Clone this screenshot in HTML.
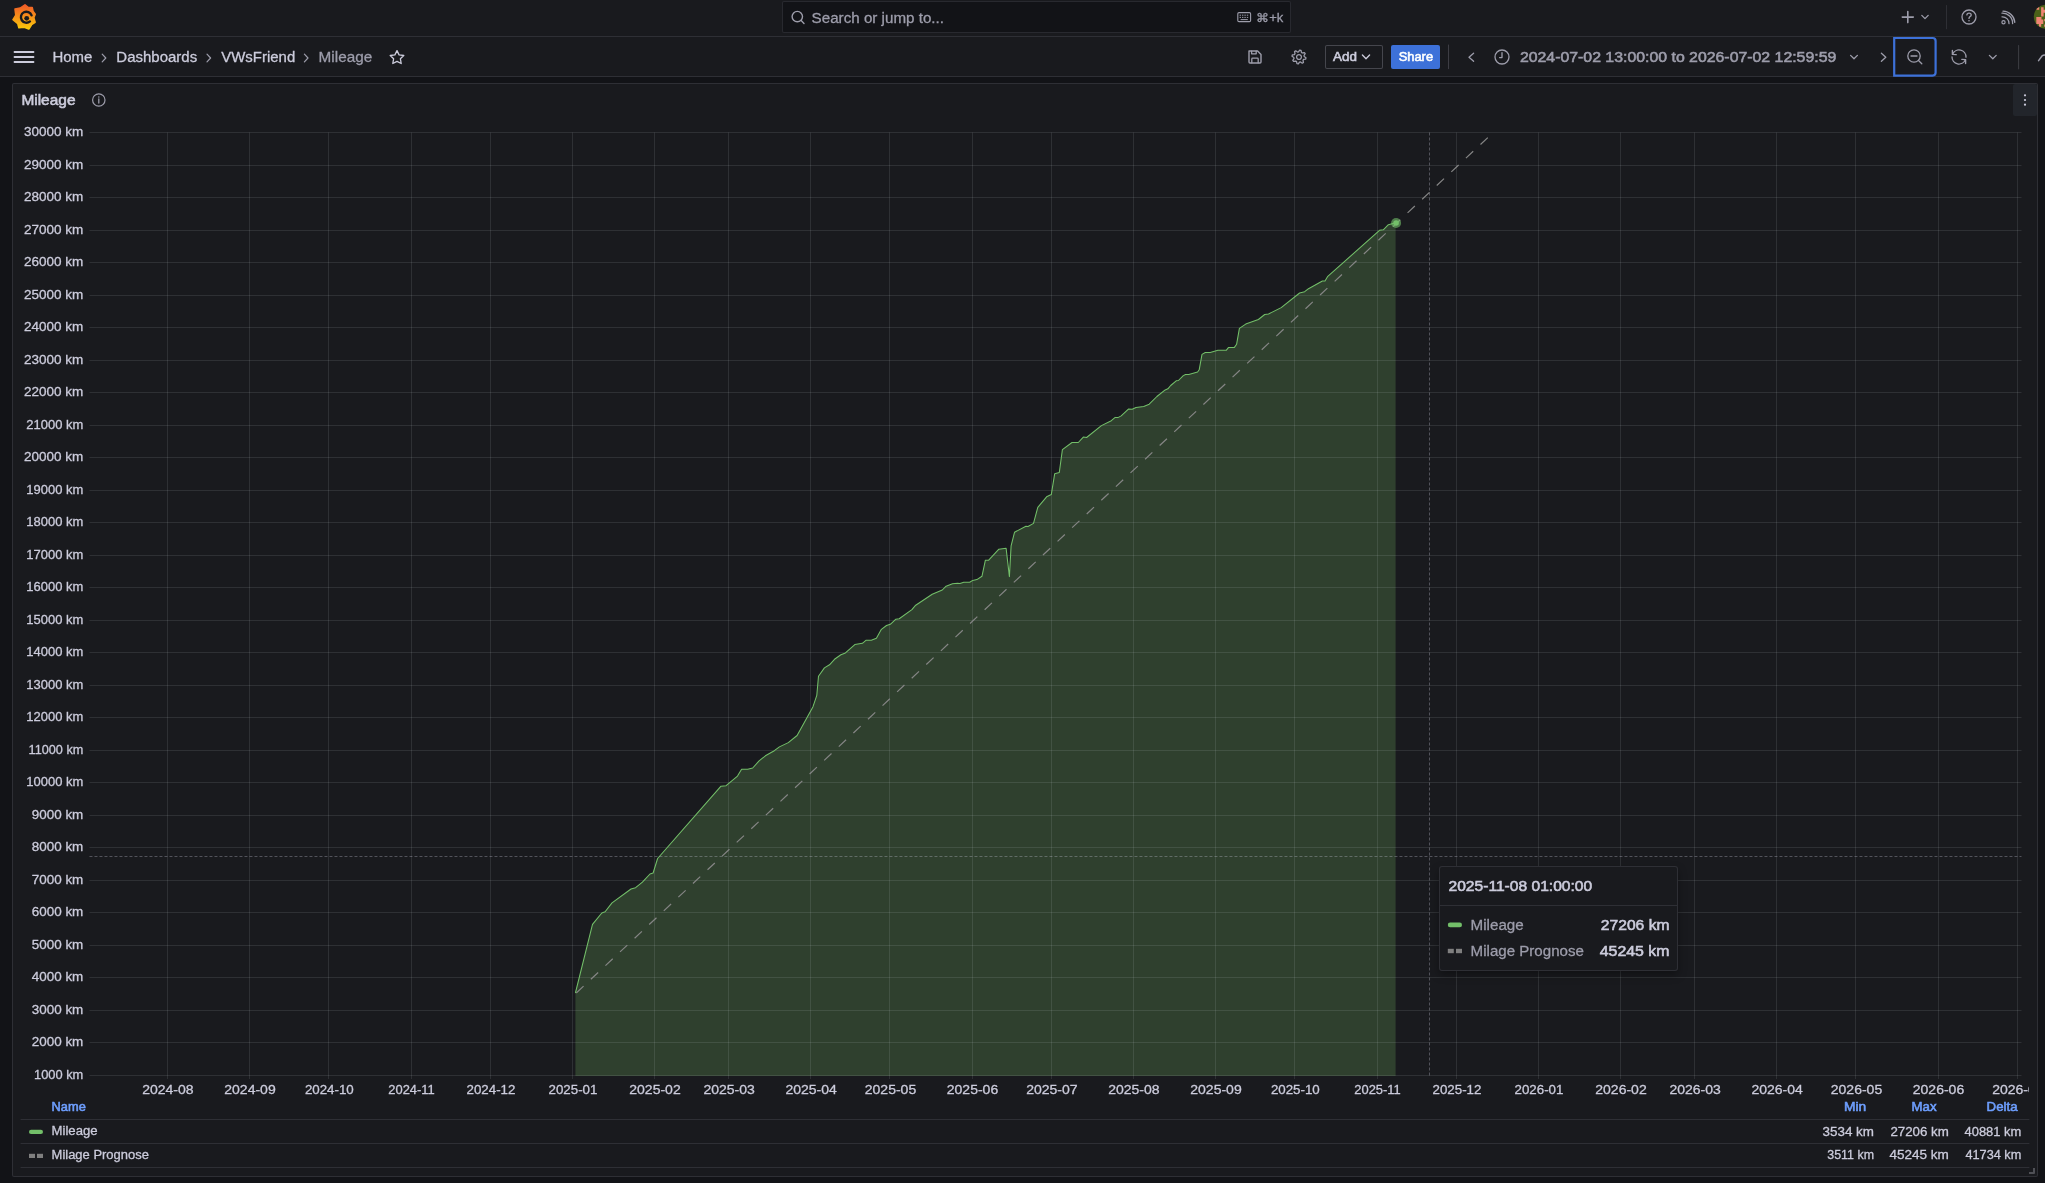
<!DOCTYPE html>
<html><head><meta charset="utf-8"><title>Mileage - VWsFriend - Dashboards - Grafana</title>
<style>
*{box-sizing:border-box;margin:0;padding:0}
html,body{width:2045px;height:1183px;overflow:hidden;background:#121317;font-family:"Liberation Sans", sans-serif;color:#ccccdc}
.topbar{position:absolute;left:0;top:0;width:2045px;height:37px;background:#191a1e;border-bottom:1px solid rgba(204,204,220,0.12)}
.toolbar{position:absolute;left:0;top:37px;width:2045px;height:40px;background:#191a1e;border-bottom:1px solid rgba(204,204,220,0.12)}
.search{position:absolute;left:782px;top:1px;width:509px;height:32px;background:#121317;border:1px solid rgba(204,204,220,0.12);border-radius:2px}
.btn-add{position:absolute;left:1325px;top:8px;width:58px;height:24px;border:1px solid rgba(204,204,220,0.25);border-radius:2px;background:#191a1e}
.btn-share{position:absolute;left:1391px;top:8px;width:49px;height:24px;border-radius:2px;background:#3d71d9}
.panel{position:absolute;left:12px;top:83px;width:2026px;height:1094px;background:#191a1e;border:1px solid rgba(204,204,220,0.12);border-radius:2px}
.pmenu{position:absolute;left:2013px;top:84px;width:24px;height:32px;background:#22252b;border-radius:2px}
.tooltip{position:absolute;left:1439px;top:866px;width:239px;height:105px;background:#191a1e;border:1px solid rgba(204,204,220,0.12);border-radius:3px;box-shadow:0 4px 8px rgba(0,0,0,0.35)}
.tooltip .hdr{position:absolute;left:0;top:38px;width:100%;height:1px;background:rgba(204,204,220,0.12)}
</style></head><body>
<div class="topbar"><div class="search"></div></div>
<div class="toolbar"><div class="btn-add"></div><div class="btn-share"></div></div>
<div class="panel"></div>
<div class="pmenu"></div>

<svg width="2045" height="1183" style="position:absolute;left:0;top:0">
<defs><clipPath id="plot"><rect x="89.47" y="132.0" width="1932.0" height="944.0"/></clipPath></defs>
<path d="M575.4 993.0 L592.5 924.4 L601.8 913.0 L605.1 911.8 L612.0 902.9 L631.0 889.0 L635.6 887.7 L642.4 882.1 L650.0 874.0 L653.1 873.0 L657.6 858.5 L721.0 786.2 L726.1 785.7 L737.5 776.1 L741.6 769.2 L747.7 769.2 L752.7 768.0 L759.1 760.9 L765.4 755.8 L774.3 750.7 L779.4 746.9 L788.3 742.6 L797.1 735.5 L805.4 720.6 L813.0 706.7 L816.8 695.3 L818.5 676.3 L824.4 667.9 L829.5 664.8 L834.5 659.3 L840.9 654.7 L845.4 652.9 L854.8 644.6 L862.4 643.3 L866.2 640.2 L871.3 640.2 L876.4 638.2 L881.4 629.3 L886.5 625.5 L890.3 624.3 L895.9 619.2 L899.2 618.7 L911.9 609.6 L915.7 605.2 L932.2 594.3 L942.3 590.0 L946.1 586.2 L952.5 583.7 L957.5 583.2 L960.0 583.4 L963.8 582.2 L969.7 582.3 L972.7 580.4 L976.9 579.6 L982.0 576.2 L985.4 560.2 L988.7 560.2 L998.9 549.2 L1006.1 548.2 L1009.4 576.6 L1011.1 545.8 L1014.5 532.3 L1025.9 526.3 L1028.0 526.5 L1033.5 523.4 L1037.8 507.3 L1046.6 496.8 L1051.3 494.6 L1054.7 473.7 L1059.3 472.5 L1062.4 449.6 L1072.0 442.5 L1078.3 442.5 L1083.3 437.1 L1086.6 437.5 L1101.4 425.6 L1111.3 420.7 L1115.2 417.4 L1117.9 417.6 L1121.2 415.9 L1128.4 409.1 L1132.2 409.3 L1136.0 407.5 L1143.7 406.4 L1149.2 404.2 L1156.9 396.5 L1165.2 389.9 L1167.9 388.8 L1170.7 385.5 L1176.2 380.8 L1178.4 380.5 L1183.3 375.6 L1185.5 374.5 L1188.8 374.5 L1197.6 372.0 L1199.2 369.8 L1202.0 354.4 L1205.3 352.5 L1210.2 352.5 L1217.9 350.3 L1226.2 350.3 L1228.4 347.6 L1234.4 347.4 L1236.6 344.3 L1239.4 328.4 L1245.7 324.1 L1258.4 319.5 L1264.7 314.5 L1268.5 314.0 L1281.2 307.6 L1299.6 293.0 L1304.7 291.7 L1308.5 288.7 L1322.4 281.0 L1325.0 281.0 L1327.5 276.7 L1379.5 230.3 L1383.3 229.8 L1388.4 224.7 L1395.6 222.7 L1395.6 1076 L575.4 1076 Z" fill="rgb(47,64,46)"/>
<path d="M89.5 1075.5H2021.5 M89.5 1042.5H2021.5 M89.5 1010.5H2021.5 M89.5 977.5H2021.5 M89.5 945.5H2021.5 M89.5 912.5H2021.5 M89.5 880.5H2021.5 M89.5 847.5H2021.5 M89.5 815.5H2021.5 M89.5 782.5H2021.5 M89.5 750.5H2021.5 M89.5 717.5H2021.5 M89.5 685.5H2021.5 M89.5 652.5H2021.5 M89.5 620.5H2021.5 M89.5 587.5H2021.5 M89.5 555.5H2021.5 M89.5 522.5H2021.5 M89.5 490.5H2021.5 M89.5 457.5H2021.5 M89.5 425.5H2021.5 M89.5 392.5H2021.5 M89.5 360.5H2021.5 M89.5 327.5H2021.5 M89.5 295.5H2021.5 M89.5 262.5H2021.5 M89.5 230.5H2021.5 M89.5 197.5H2021.5 M89.5 165.5H2021.5 M89.5 132.5H2021.5 M167.5 132.5V1079.0 M249.5 132.5V1079.0 M328.5 132.5V1079.0 M411.5 132.5V1079.0 M490.5 132.5V1079.0 M572.5 132.5V1079.0 M654.5 132.5V1079.0 M728.5 132.5V1079.0 M810.5 132.5V1079.0 M889.5 132.5V1079.0 M972.5 132.5V1079.0 M1051.5 132.5V1079.0 M1133.5 132.5V1079.0 M1215.5 132.5V1079.0 M1294.5 132.5V1079.0 M1377.5 132.5V1079.0 M1456.5 132.5V1079.0 M1538.5 132.5V1079.0 M1620.5 132.5V1079.0 M1694.5 132.5V1079.0 M1776.5 132.5V1079.0 M1855.5 132.5V1079.0 M1938.5 132.5V1079.0 M2017.5 132.5V1079.0" stroke="rgba(240,250,255,0.10)" stroke-width="1" fill="none"/>
<g clip-path="url(#plot)">
<line x1="575.4" y1="993.8" x2="2021.5" y2="-363.2" stroke="#858585" stroke-width="1.2" stroke-dasharray="10 10" stroke-dashoffset="-1.2"/>
</g>
<path d="M575.4 993.0 L592.5 924.4 L601.8 913.0 L605.1 911.8 L612.0 902.9 L631.0 889.0 L635.6 887.7 L642.4 882.1 L650.0 874.0 L653.1 873.0 L657.6 858.5 L721.0 786.2 L726.1 785.7 L737.5 776.1 L741.6 769.2 L747.7 769.2 L752.7 768.0 L759.1 760.9 L765.4 755.8 L774.3 750.7 L779.4 746.9 L788.3 742.6 L797.1 735.5 L805.4 720.6 L813.0 706.7 L816.8 695.3 L818.5 676.3 L824.4 667.9 L829.5 664.8 L834.5 659.3 L840.9 654.7 L845.4 652.9 L854.8 644.6 L862.4 643.3 L866.2 640.2 L871.3 640.2 L876.4 638.2 L881.4 629.3 L886.5 625.5 L890.3 624.3 L895.9 619.2 L899.2 618.7 L911.9 609.6 L915.7 605.2 L932.2 594.3 L942.3 590.0 L946.1 586.2 L952.5 583.7 L957.5 583.2 L960.0 583.4 L963.8 582.2 L969.7 582.3 L972.7 580.4 L976.9 579.6 L982.0 576.2 L985.4 560.2 L988.7 560.2 L998.9 549.2 L1006.1 548.2 L1009.4 576.6 L1011.1 545.8 L1014.5 532.3 L1025.9 526.3 L1028.0 526.5 L1033.5 523.4 L1037.8 507.3 L1046.6 496.8 L1051.3 494.6 L1054.7 473.7 L1059.3 472.5 L1062.4 449.6 L1072.0 442.5 L1078.3 442.5 L1083.3 437.1 L1086.6 437.5 L1101.4 425.6 L1111.3 420.7 L1115.2 417.4 L1117.9 417.6 L1121.2 415.9 L1128.4 409.1 L1132.2 409.3 L1136.0 407.5 L1143.7 406.4 L1149.2 404.2 L1156.9 396.5 L1165.2 389.9 L1167.9 388.8 L1170.7 385.5 L1176.2 380.8 L1178.4 380.5 L1183.3 375.6 L1185.5 374.5 L1188.8 374.5 L1197.6 372.0 L1199.2 369.8 L1202.0 354.4 L1205.3 352.5 L1210.2 352.5 L1217.9 350.3 L1226.2 350.3 L1228.4 347.6 L1234.4 347.4 L1236.6 344.3 L1239.4 328.4 L1245.7 324.1 L1258.4 319.5 L1264.7 314.5 L1268.5 314.0 L1281.2 307.6 L1299.6 293.0 L1304.7 291.7 L1308.5 288.7 L1322.4 281.0 L1325.0 281.0 L1327.5 276.7 L1379.5 230.3 L1383.3 229.8 L1388.4 224.7 L1395.6 222.7" stroke="#73bf69" stroke-width="1.05" fill="none" stroke-linejoin="round"/>
<circle cx="1396.1" cy="223" r="5" fill="rgba(115,191,105,0.6)"/>
<circle cx="1396.1" cy="223" r="2.8" fill="#73bf69"/>
<line x1="89.47" y1="856.5" x2="2021.49" y2="856.5" stroke="rgba(204,204,220,0.32)" stroke-width="1" stroke-dasharray="3 2"/>
<line x1="1429.5" y1="132.5" x2="1429.5" y2="1075.5" stroke="rgba(204,204,220,0.32)" stroke-width="1" stroke-dasharray="3 2"/>
</svg>
<div class="tooltip"><div class="hdr"></div></div>

<svg width="2045" height="1183" style="position:absolute;left:0;top:0" fill="none" stroke-linecap="round" stroke-linejoin="round">
<defs><linearGradient id="lg" x1="0" y1="0" x2="0" y2="1"><stop offset="0" stop-color="#f05a28"/><stop offset="1" stop-color="#fbca0a"/></linearGradient></defs>
<!-- logo -->
<path d="M25 4.8 L28.1 7.3 L32.2 7.5 L33 11.2 L35.2 14.2 L33.8 17.6 L35.1 22.3 L31.5 24.7 L28.8 29 L24.3 27.2 L18.9 27.7 L17.8 23.7 L13 19.7 L15.8 15.2 L15 9 L20.2 8.1 Z" fill="url(#lg)" stroke="url(#lg)" stroke-width="1.6" stroke-linejoin="round"/>
<path d="M31.57 15.32 A5.5 5.5 0 1 0 29.94 21.41" stroke="#191a1e" stroke-width="2.4" fill="none" stroke-linecap="round"/>
<circle cx="26.7" cy="18.3" r="2.4" fill="#191a1e" stroke="none"/>
<!-- search icon -->
<circle cx="797.3" cy="16.6" r="5.2" stroke="#9d9dab" stroke-width="1.4"/>
<path d="M801.2 20.6 L804 23.4" stroke="#9d9dab" stroke-width="1.4"/>
<!-- keyboard -->
<rect x="1237.8" y="12.6" width="12.8" height="9" rx="1.2" stroke="#9d9dab" stroke-width="1.1"/>
<path d="M1240 15.2h0.6M1242.4 15.2h0.6M1244.8 15.2h0.6M1247.2 15.2h0.6M1240 17.4h0.6M1242.4 17.4h0.6M1244.8 17.4h0.6M1247.2 17.4h0.6M1241 19.6h6.4" stroke="#9d9dab" stroke-width="1"/>
<!-- plus -->
<path d="M1907.8 11.6V22.6M1902.3 17.1H1913.3" stroke="#9d9dab" stroke-width="1.6"/>
<path d="M1921.8 15.4 L1925 18.6 L1928.2 15.4" stroke="#9d9dab" stroke-width="1.3"/>
<path d="M1946.5 5.5V28.8" stroke="rgba(204,204,220,0.12)" stroke-width="1"/>
<!-- help -->
<circle cx="1969" cy="17" r="7" stroke="#9d9dab" stroke-width="1.3"/>
<path d="M1966.9 14.9 C1966.9 12.4 1971.2 12.4 1971.2 14.9 C1971.2 16.6 1969 16.6 1969 18.4" stroke="#9d9dab" stroke-width="1.3"/>
<circle cx="1969" cy="20.7" r="0.8" fill="#9d9dab" stroke="none"/>
<!-- rss -->
<circle cx="2003.5" cy="22.3" r="1.6" stroke="#9d9dab" stroke-width="1.2"/>
<path d="M2002 16.8 A6.5 6.5 0 0 1 2009 23.6 M2002 13.2 A10 10 0 0 1 2012.6 23.6 M2003 11.2 A12 12 0 0 1 2014.8 22.4" stroke="#9d9dab" stroke-width="1.3"/>
<!-- avatar -->
<defs><clipPath id="av"><circle cx="2045.9" cy="16.8" r="12.1"/></clipPath></defs>
<g clip-path="url(#av)" stroke="none">
<rect x="2033" y="4" width="14" height="26" fill="#4b6119"/>
<path d="M2036.4 7h2.8v2.8h-2.8z M2041.1 7.3h2.5v9.2h-2.5z M2043.5 9.7h2v3.1h-2z M2036.3 17h5.2v7h-5.2z M2041.4 19.5h1.9v4.5h-1.9z M2038.9 24h2.3v2.8h-2.3z M2044.2 18.9h1.8v2.4h-1.8z M2044.2 24.4h1.8v2.4h-1.8z" fill="#ef8474"/>
</g>
<!-- hamburger -->
<path d="M14.5 52H33.5M14.5 57H33.5M14.5 62H33.5" stroke="#ccccdc" stroke-width="1.8"/>
<!-- breadcrumb chevrons -->
<path d="M102.2 54.2 L105.8 58 L102.2 61.8" stroke="#9d9dab" stroke-width="1.2"/>
<path d="M207 54.2 L210.6 58 L207 61.8" stroke="#9d9dab" stroke-width="1.2"/>
<path d="M304.4 54.2 L308 58 L304.4 61.8" stroke="#9d9dab" stroke-width="1.2"/>
<!-- star -->
<path d="M397 50.6 L399.1 54.9 L403.8 55.5 L400.4 58.8 L401.2 63.5 L397 61.3 L392.8 63.5 L393.6 58.8 L390.2 55.5 L394.9 54.9 Z" stroke="#ccccdc" stroke-width="1.3"/>
<!-- save -->
<path d="M1249 51 H1257.6 L1261 54.4 V62 Q1261 63 1260 63 H1250 Q1249 63 1249 62 Z" stroke="#9d9dab" stroke-width="1.4"/>
<path d="M1251.6 51.2 V53.8 H1256.2 V51.2 M1251.8 62.8 V59 Q1251.8 58.2 1252.6 58.2 H1257.4 Q1258.2 58.2 1258.2 59 V62.8" stroke="#9d9dab" stroke-width="1.3"/>
<!-- gear -->
<g transform="translate(1299,57)" stroke="#9d9dab" stroke-width="1.3">
<path d="M5.18 -0.51L6.97 0.69L6.70 2.03L4.58 2.45L4.02 3.30L4.44 5.41L3.30 6.17L1.51 4.98L0.51 5.18L-0.69 6.97L-2.03 6.70L-2.45 4.58L-3.30 4.02L-5.41 4.44L-6.17 3.30L-4.98 1.51L-5.18 0.51L-6.97 -0.69L-6.70 -2.03L-4.58 -2.45L-4.02 -3.30L-4.44 -5.41L-3.30 -6.17L-1.51 -4.98L-0.51 -5.18L0.69 -6.97L2.03 -6.70L2.45 -4.58L3.30 -4.02L5.41 -4.44L6.17 -3.30L4.98 -1.51Z"/>
<circle cx="0" cy="0" r="2.4"/>
</g>
<!-- add chevron -->
<path d="M1362.4 55 L1366 58.8 L1369.6 55" stroke="#ccccdc" stroke-width="1.3"/>
<!-- separators -->
<path d="M1448.5 45V68.7" stroke="rgba(204,204,220,0.2)" stroke-width="1"/>
<path d="M2018.6 45.5V68.9" stroke="rgba(204,204,220,0.2)" stroke-width="1"/>
<!-- time < -->
<path d="M1473.6 53.2 L1469 57.2 L1473.6 61.2" stroke="#9d9dab" stroke-width="1.3"/>
<!-- clock -->
<circle cx="1502" cy="57" r="7" stroke="#9d9dab" stroke-width="1.3"/>
<path d="M1502 52.6 V57.6 H1499.6" stroke="#9d9dab" stroke-width="1.3"/>
<!-- time chevron down -->
<path d="M1850.6 55.4 L1854 58.8 L1857.4 55.4" stroke="#9d9dab" stroke-width="1.3"/>
<path d="M1881.4 53.2 L1885.8 57.2 L1881.4 61.2" stroke="#9d9dab" stroke-width="1.3"/>
<!-- zoom focus box -->
<path d="M1894.2 38 H1932.6 Q1935.6 38 1935.6 41 V72.6 Q1935.6 75.6 1932.6 75.6 H1894.2 Z" stroke="#3d71d9" stroke-width="2.2" stroke-linecap="butt" stroke-linejoin="miter"/>
<circle cx="1914" cy="56" r="6.2" stroke="#9d9dab" stroke-width="1.3"/>
<path d="M1911 56 H1917 M1918.5 60.5 L1921.8 63.8" stroke="#9d9dab" stroke-width="1.3"/>
<!-- refresh -->
<path d="M1952.6 54.2 A7 7 0 0 1 1966 57.2" stroke="#9d9dab" stroke-width="1.3"/>
<path d="M1965.4 59.8 A7 7 0 0 1 1952 56.8" stroke="#9d9dab" stroke-width="1.3"/>
<path d="M1952.4 50.4 L1952.4 54.4 L1956.2 54.6" stroke="#9d9dab" stroke-width="1.4"/>
<path d="M1965.6 63.6 L1965.6 59.6 L1961.8 59.4" stroke="#9d9dab" stroke-width="1.4"/>
<path d="M1989.4 55.4 L1992.8 58.8 L1996.2 55.4" stroke="#9d9dab" stroke-width="1.3"/>
<path d="M2038.6 60.6 L2042.2 55.8 Q2043 55 2045 55" stroke="#9d9dab" stroke-width="1.5"/>
<!-- panel info icon -->
<circle cx="98.8" cy="100" r="6.2" stroke="#9d9dab" stroke-width="1.2"/>
<path d="M98.8 99 V103" stroke="#9d9dab" stroke-width="1.3"/>
<circle cx="98.8" cy="96.9" r="0.75" fill="#9d9dab" stroke="none"/>
<!-- panel menu -->
<circle cx="2025" cy="95.3" r="1.1" fill="#ccccdc" stroke="none"/>
<circle cx="2025" cy="100" r="1.1" fill="#ccccdc" stroke="none"/>
<circle cx="2025" cy="104.7" r="1.1" fill="#ccccdc" stroke="none"/>
<!-- legend icons -->
<rect x="29" y="1129.8" width="14" height="4.2" rx="2.1" fill="#73bf69" stroke="none"/>
<rect x="29" y="1153.8" width="6" height="4.2" fill="#7f7f7f" stroke="none"/>
<rect x="37" y="1153.8" width="6" height="4.2" fill="#7f7f7f" stroke="none"/>
<path d="M21 1119.5H2029M21 1143.5H2029M21 1167.5H2029" stroke="rgba(204,204,220,0.12)" stroke-width="1"/>
<!-- tooltip icons -->
<rect x="1447.8" y="922.6" width="14.2" height="4.6" rx="2.3" fill="#73bf69" stroke="none"/>
<rect x="1447.8" y="948.8" width="6" height="4.4" fill="#7f7f7f" stroke="none"/>
<rect x="1456" y="948.8" width="6" height="4.4" fill="#7f7f7f" stroke="none"/>
<!-- resize handle -->
<path d="M2029 1173 H2034 V1168" stroke="rgba(204,204,220,0.3)" stroke-width="2" stroke-linecap="butt"/>
</svg>
<svg width="2045" height="1183" style="position:absolute;left:0;top:0;font-family:&quot;Liberation Sans&quot;,sans-serif;filter:blur(0)"><defs><clipPath id="xclip"><rect x="0" y="1070" width="2029" height="40"/></clipPath></defs><text x="83.3" y="1079.0" font-size="12" fill="#ccccdc" stroke="#ccccdc" stroke-width="0.28" text-anchor="end" textLength="49.3" lengthAdjust="spacingAndGlyphs">1000 km</text>
<text x="83.3" y="1046.0" font-size="12" fill="#ccccdc" stroke="#ccccdc" stroke-width="0.28" text-anchor="end" textLength="51.5" lengthAdjust="spacingAndGlyphs">2000 km</text>
<text x="83.3" y="1014.0" font-size="12" fill="#ccccdc" stroke="#ccccdc" stroke-width="0.28" text-anchor="end" textLength="51.5" lengthAdjust="spacingAndGlyphs">3000 km</text>
<text x="83.3" y="981.0" font-size="12" fill="#ccccdc" stroke="#ccccdc" stroke-width="0.28" text-anchor="end" textLength="51.5" lengthAdjust="spacingAndGlyphs">4000 km</text>
<text x="83.3" y="949.0" font-size="12" fill="#ccccdc" stroke="#ccccdc" stroke-width="0.28" text-anchor="end" textLength="51.5" lengthAdjust="spacingAndGlyphs">5000 km</text>
<text x="83.3" y="916.0" font-size="12" fill="#ccccdc" stroke="#ccccdc" stroke-width="0.28" text-anchor="end" textLength="51.5" lengthAdjust="spacingAndGlyphs">6000 km</text>
<text x="83.3" y="884.0" font-size="12" fill="#ccccdc" stroke="#ccccdc" stroke-width="0.28" text-anchor="end" textLength="51.5" lengthAdjust="spacingAndGlyphs">7000 km</text>
<text x="83.3" y="851.0" font-size="12" fill="#ccccdc" stroke="#ccccdc" stroke-width="0.28" text-anchor="end" textLength="51.5" lengthAdjust="spacingAndGlyphs">8000 km</text>
<text x="83.3" y="819.0" font-size="12" fill="#ccccdc" stroke="#ccccdc" stroke-width="0.28" text-anchor="end" textLength="51.5" lengthAdjust="spacingAndGlyphs">9000 km</text>
<text x="83.3" y="786.0" font-size="12" fill="#ccccdc" stroke="#ccccdc" stroke-width="0.28" text-anchor="end" textLength="57.0" lengthAdjust="spacingAndGlyphs">10000 km</text>
<text x="83.3" y="754.0" font-size="12" fill="#ccccdc" stroke="#ccccdc" stroke-width="0.28" text-anchor="end" textLength="54.7" lengthAdjust="spacingAndGlyphs">11000 km</text>
<text x="83.3" y="721.0" font-size="12" fill="#ccccdc" stroke="#ccccdc" stroke-width="0.28" text-anchor="end" textLength="57.0" lengthAdjust="spacingAndGlyphs">12000 km</text>
<text x="83.3" y="689.0" font-size="12" fill="#ccccdc" stroke="#ccccdc" stroke-width="0.28" text-anchor="end" textLength="57.0" lengthAdjust="spacingAndGlyphs">13000 km</text>
<text x="83.3" y="656.0" font-size="12" fill="#ccccdc" stroke="#ccccdc" stroke-width="0.28" text-anchor="end" textLength="57.0" lengthAdjust="spacingAndGlyphs">14000 km</text>
<text x="83.3" y="624.0" font-size="12" fill="#ccccdc" stroke="#ccccdc" stroke-width="0.28" text-anchor="end" textLength="57.0" lengthAdjust="spacingAndGlyphs">15000 km</text>
<text x="83.3" y="591.0" font-size="12" fill="#ccccdc" stroke="#ccccdc" stroke-width="0.28" text-anchor="end" textLength="57.0" lengthAdjust="spacingAndGlyphs">16000 km</text>
<text x="83.3" y="559.0" font-size="12" fill="#ccccdc" stroke="#ccccdc" stroke-width="0.28" text-anchor="end" textLength="57.0" lengthAdjust="spacingAndGlyphs">17000 km</text>
<text x="83.3" y="526.0" font-size="12" fill="#ccccdc" stroke="#ccccdc" stroke-width="0.28" text-anchor="end" textLength="57.0" lengthAdjust="spacingAndGlyphs">18000 km</text>
<text x="83.3" y="494.0" font-size="12" fill="#ccccdc" stroke="#ccccdc" stroke-width="0.28" text-anchor="end" textLength="57.0" lengthAdjust="spacingAndGlyphs">19000 km</text>
<text x="83.3" y="461.0" font-size="12" fill="#ccccdc" stroke="#ccccdc" stroke-width="0.28" text-anchor="end" textLength="59.3" lengthAdjust="spacingAndGlyphs">20000 km</text>
<text x="83.3" y="429.0" font-size="12" fill="#ccccdc" stroke="#ccccdc" stroke-width="0.28" text-anchor="end" textLength="57.0" lengthAdjust="spacingAndGlyphs">21000 km</text>
<text x="83.3" y="396.0" font-size="12" fill="#ccccdc" stroke="#ccccdc" stroke-width="0.28" text-anchor="end" textLength="59.3" lengthAdjust="spacingAndGlyphs">22000 km</text>
<text x="83.3" y="364.0" font-size="12" fill="#ccccdc" stroke="#ccccdc" stroke-width="0.28" text-anchor="end" textLength="59.3" lengthAdjust="spacingAndGlyphs">23000 km</text>
<text x="83.3" y="331.0" font-size="12" fill="#ccccdc" stroke="#ccccdc" stroke-width="0.28" text-anchor="end" textLength="59.3" lengthAdjust="spacingAndGlyphs">24000 km</text>
<text x="83.3" y="299.0" font-size="12" fill="#ccccdc" stroke="#ccccdc" stroke-width="0.28" text-anchor="end" textLength="59.3" lengthAdjust="spacingAndGlyphs">25000 km</text>
<text x="83.3" y="266.0" font-size="12" fill="#ccccdc" stroke="#ccccdc" stroke-width="0.28" text-anchor="end" textLength="59.3" lengthAdjust="spacingAndGlyphs">26000 km</text>
<text x="83.3" y="234.0" font-size="12" fill="#ccccdc" stroke="#ccccdc" stroke-width="0.28" text-anchor="end" textLength="59.3" lengthAdjust="spacingAndGlyphs">27000 km</text>
<text x="83.3" y="201.0" font-size="12" fill="#ccccdc" stroke="#ccccdc" stroke-width="0.28" text-anchor="end" textLength="59.3" lengthAdjust="spacingAndGlyphs">28000 km</text>
<text x="83.3" y="169.0" font-size="12" fill="#ccccdc" stroke="#ccccdc" stroke-width="0.28" text-anchor="end" textLength="59.3" lengthAdjust="spacingAndGlyphs">29000 km</text>
<text x="83.3" y="136.0" font-size="12" fill="#ccccdc" stroke="#ccccdc" stroke-width="0.28" text-anchor="end" textLength="59.3" lengthAdjust="spacingAndGlyphs">30000 km</text>
<text x="142.2" y="1094.0" font-size="12" fill="#ccccdc" stroke="#ccccdc" stroke-width="0.28" text-anchor="start" textLength="51.4" lengthAdjust="spacingAndGlyphs">2024-08</text>
<text x="224.3" y="1094.0" font-size="12" fill="#ccccdc" stroke="#ccccdc" stroke-width="0.28" text-anchor="start" textLength="51.4" lengthAdjust="spacingAndGlyphs">2024-09</text>
<text x="304.9" y="1094.0" font-size="12" fill="#ccccdc" stroke="#ccccdc" stroke-width="0.28" text-anchor="start" textLength="48.9" lengthAdjust="spacingAndGlyphs">2024-10</text>
<text x="388.3" y="1094.0" font-size="12" fill="#ccccdc" stroke="#ccccdc" stroke-width="0.28" text-anchor="start" textLength="46.4" lengthAdjust="spacingAndGlyphs">2024-11</text>
<text x="466.5" y="1094.0" font-size="12" fill="#ccccdc" stroke="#ccccdc" stroke-width="0.28" text-anchor="start" textLength="48.9" lengthAdjust="spacingAndGlyphs">2024-12</text>
<text x="548.5" y="1094.0" font-size="12" fill="#ccccdc" stroke="#ccccdc" stroke-width="0.28" text-anchor="start" textLength="48.9" lengthAdjust="spacingAndGlyphs">2025-01</text>
<text x="629.3" y="1094.0" font-size="12" fill="#ccccdc" stroke="#ccccdc" stroke-width="0.28" text-anchor="start" textLength="51.4" lengthAdjust="spacingAndGlyphs">2025-02</text>
<text x="703.4" y="1094.0" font-size="12" fill="#ccccdc" stroke="#ccccdc" stroke-width="0.28" text-anchor="start" textLength="51.4" lengthAdjust="spacingAndGlyphs">2025-03</text>
<text x="785.4" y="1094.0" font-size="12" fill="#ccccdc" stroke="#ccccdc" stroke-width="0.28" text-anchor="start" textLength="51.4" lengthAdjust="spacingAndGlyphs">2025-04</text>
<text x="864.8" y="1094.0" font-size="12" fill="#ccccdc" stroke="#ccccdc" stroke-width="0.28" text-anchor="start" textLength="51.4" lengthAdjust="spacingAndGlyphs">2025-05</text>
<text x="946.8" y="1094.0" font-size="12" fill="#ccccdc" stroke="#ccccdc" stroke-width="0.28" text-anchor="start" textLength="51.4" lengthAdjust="spacingAndGlyphs">2025-06</text>
<text x="1026.2" y="1094.0" font-size="12" fill="#ccccdc" stroke="#ccccdc" stroke-width="0.28" text-anchor="start" textLength="51.4" lengthAdjust="spacingAndGlyphs">2025-07</text>
<text x="1108.2" y="1094.0" font-size="12" fill="#ccccdc" stroke="#ccccdc" stroke-width="0.28" text-anchor="start" textLength="51.4" lengthAdjust="spacingAndGlyphs">2025-08</text>
<text x="1190.3" y="1094.0" font-size="12" fill="#ccccdc" stroke="#ccccdc" stroke-width="0.28" text-anchor="start" textLength="51.4" lengthAdjust="spacingAndGlyphs">2025-09</text>
<text x="1270.9" y="1094.0" font-size="12" fill="#ccccdc" stroke="#ccccdc" stroke-width="0.28" text-anchor="start" textLength="48.9" lengthAdjust="spacingAndGlyphs">2025-10</text>
<text x="1354.3" y="1094.0" font-size="12" fill="#ccccdc" stroke="#ccccdc" stroke-width="0.28" text-anchor="start" textLength="46.4" lengthAdjust="spacingAndGlyphs">2025-11</text>
<text x="1432.5" y="1094.0" font-size="12" fill="#ccccdc" stroke="#ccccdc" stroke-width="0.28" text-anchor="start" textLength="48.9" lengthAdjust="spacingAndGlyphs">2025-12</text>
<text x="1514.5" y="1094.0" font-size="12" fill="#ccccdc" stroke="#ccccdc" stroke-width="0.28" text-anchor="start" textLength="48.9" lengthAdjust="spacingAndGlyphs">2026-01</text>
<text x="1595.3" y="1094.0" font-size="12" fill="#ccccdc" stroke="#ccccdc" stroke-width="0.28" text-anchor="start" textLength="51.4" lengthAdjust="spacingAndGlyphs">2026-02</text>
<text x="1669.4" y="1094.0" font-size="12" fill="#ccccdc" stroke="#ccccdc" stroke-width="0.28" text-anchor="start" textLength="51.4" lengthAdjust="spacingAndGlyphs">2026-03</text>
<text x="1751.4" y="1094.0" font-size="12" fill="#ccccdc" stroke="#ccccdc" stroke-width="0.28" text-anchor="start" textLength="51.4" lengthAdjust="spacingAndGlyphs">2026-04</text>
<text x="1830.8" y="1094.0" font-size="12" fill="#ccccdc" stroke="#ccccdc" stroke-width="0.28" text-anchor="start" textLength="51.4" lengthAdjust="spacingAndGlyphs">2026-05</text>
<text x="1912.8" y="1094.0" font-size="12" fill="#ccccdc" stroke="#ccccdc" stroke-width="0.28" text-anchor="start" textLength="51.4" lengthAdjust="spacingAndGlyphs">2026-06</text>
<g clip-path="url(#xclip)">
<text x="1992.2" y="1094.0" font-size="12" fill="#ccccdc" stroke="#ccccdc" stroke-width="0.28" text-anchor="start" textLength="51.4" lengthAdjust="spacingAndGlyphs">2026-07</text>
</g>
<text x="51.6" y="1110.8" font-size="12" fill="#6e9fff" stroke="#6e9fff" stroke-width="0.55" text-anchor="start" textLength="34.2" lengthAdjust="spacingAndGlyphs">Name</text>
<text x="1844.0" y="1111.4" font-size="12" fill="#6e9fff" stroke="#6e9fff" stroke-width="0.55" text-anchor="start" textLength="22.2" lengthAdjust="spacingAndGlyphs">Min</text>
<text x="1911.5" y="1111.4" font-size="12" fill="#6e9fff" stroke="#6e9fff" stroke-width="0.55" text-anchor="start" textLength="25.0" lengthAdjust="spacingAndGlyphs">Max</text>
<text x="1986.6" y="1111.4" font-size="12" fill="#6e9fff" stroke="#6e9fff" stroke-width="0.55" text-anchor="start" textLength="30.9" lengthAdjust="spacingAndGlyphs">Delta</text>
<text x="51.6" y="1134.9" font-size="12" fill="#ccccdc" stroke="#ccccdc" stroke-width="0.28" text-anchor="start" textLength="46.0" lengthAdjust="spacingAndGlyphs">Mileage</text>
<text x="51.6" y="1159.1" font-size="12" fill="#ccccdc" stroke="#ccccdc" stroke-width="0.28" text-anchor="start" textLength="97.3" lengthAdjust="spacingAndGlyphs">Milage Prognose</text>
<text x="1822.6" y="1135.7" font-size="12" fill="#ccccdc" stroke="#ccccdc" stroke-width="0.28" text-anchor="start" textLength="51.4" lengthAdjust="spacingAndGlyphs">3534 km</text>
<text x="1890.4" y="1135.7" font-size="12" fill="#ccccdc" stroke="#ccccdc" stroke-width="0.28" text-anchor="start" textLength="58.4" lengthAdjust="spacingAndGlyphs">27206 km</text>
<text x="1964.5" y="1135.7" font-size="12" fill="#ccccdc" stroke="#ccccdc" stroke-width="0.28" text-anchor="start" textLength="56.8" lengthAdjust="spacingAndGlyphs">40881 km</text>
<text x="1827.3" y="1159.3" font-size="12" fill="#ccccdc" stroke="#ccccdc" stroke-width="0.28" text-anchor="start" textLength="46.7" lengthAdjust="spacingAndGlyphs">3511 km</text>
<text x="1889.4" y="1159.3" font-size="12" fill="#ccccdc" stroke="#ccccdc" stroke-width="0.28" text-anchor="start" textLength="59.4" lengthAdjust="spacingAndGlyphs">45245 km</text>
<text x="1965.4" y="1159.3" font-size="12" fill="#ccccdc" stroke="#ccccdc" stroke-width="0.28" text-anchor="start" textLength="55.9" lengthAdjust="spacingAndGlyphs">41734 km</text>
<text x="1448.5" y="890.7" font-size="14" fill="#ccccdc" stroke="#ccccdc" stroke-width="0.55" text-anchor="start" textLength="143.7" lengthAdjust="spacingAndGlyphs">2025-11-08 01:00:00</text>
<text x="1470.6" y="929.8" font-size="14" fill="#9d9dab" stroke="#9d9dab" stroke-width="0.28" text-anchor="start" textLength="53.1" lengthAdjust="spacingAndGlyphs">Mileage</text>
<text x="1600.8" y="929.8" font-size="14" fill="#ccccdc" stroke="#ccccdc" stroke-width="0.55" text-anchor="start" textLength="68.7" lengthAdjust="spacingAndGlyphs">27206 km</text>
<text x="1470.6" y="955.9" font-size="14" fill="#9d9dab" stroke="#9d9dab" stroke-width="0.28" text-anchor="start" textLength="113.3" lengthAdjust="spacingAndGlyphs">Milage Prognose</text>
<text x="1599.8" y="955.9" font-size="14" fill="#ccccdc" stroke="#ccccdc" stroke-width="0.55" text-anchor="start" textLength="69.7" lengthAdjust="spacingAndGlyphs">45245 km</text>
<text x="21.4" y="105.1" font-size="14" fill="#ccccdc" stroke="#ccccdc" stroke-width="0.55" text-anchor="start" textLength="54.1" lengthAdjust="spacingAndGlyphs">Mileage</text>
<text x="52.5" y="61.9" font-size="14" fill="#ccccdc" stroke="#ccccdc" stroke-width="0.28" text-anchor="start" textLength="39.9" lengthAdjust="spacingAndGlyphs">Home</text>
<text x="116.3" y="61.9" font-size="14" fill="#ccccdc" stroke="#ccccdc" stroke-width="0.28" text-anchor="start" textLength="80.9" lengthAdjust="spacingAndGlyphs">Dashboards</text>
<text x="221.3" y="61.9" font-size="14" fill="#ccccdc" stroke="#ccccdc" stroke-width="0.28" text-anchor="start" textLength="73.9" lengthAdjust="spacingAndGlyphs">VWsFriend</text>
<text x="318.6" y="61.9" font-size="14" fill="#9d9dab" stroke="#9d9dab" stroke-width="0.28" text-anchor="start" textLength="53.6" lengthAdjust="spacingAndGlyphs">Mileage</text>
<text x="811.6" y="22.9" font-size="14" fill="#9d9dab" stroke="#9d9dab" stroke-width="0.28" text-anchor="start" textLength="132.4" lengthAdjust="spacingAndGlyphs">Search or jump to...</text>
<text x="1256.2" y="22.0" font-size="12" fill="#9d9dab" stroke="#9d9dab" stroke-width="0.28" text-anchor="start" textLength="27.1" lengthAdjust="spacingAndGlyphs">⌘+k</text>
<text x="1333.0" y="60.7" font-size="12" fill="#ccccdc" stroke="#ccccdc" stroke-width="0.55" text-anchor="start" textLength="23.9" lengthAdjust="spacingAndGlyphs">Add</text>
<text x="1398.7" y="60.7" font-size="12" fill="#ffffff" stroke="#ffffff" stroke-width="0.55" text-anchor="start" textLength="34.4" lengthAdjust="spacingAndGlyphs">Share</text>
<text x="1519.9" y="61.8" font-size="14" fill="#9d9dab" stroke="#9d9dab" stroke-width="0.55" text-anchor="start" textLength="316.4" lengthAdjust="spacingAndGlyphs">2024-07-02 13:00:00 to 2026-07-02 12:59:59</text></svg>
</body></html>
